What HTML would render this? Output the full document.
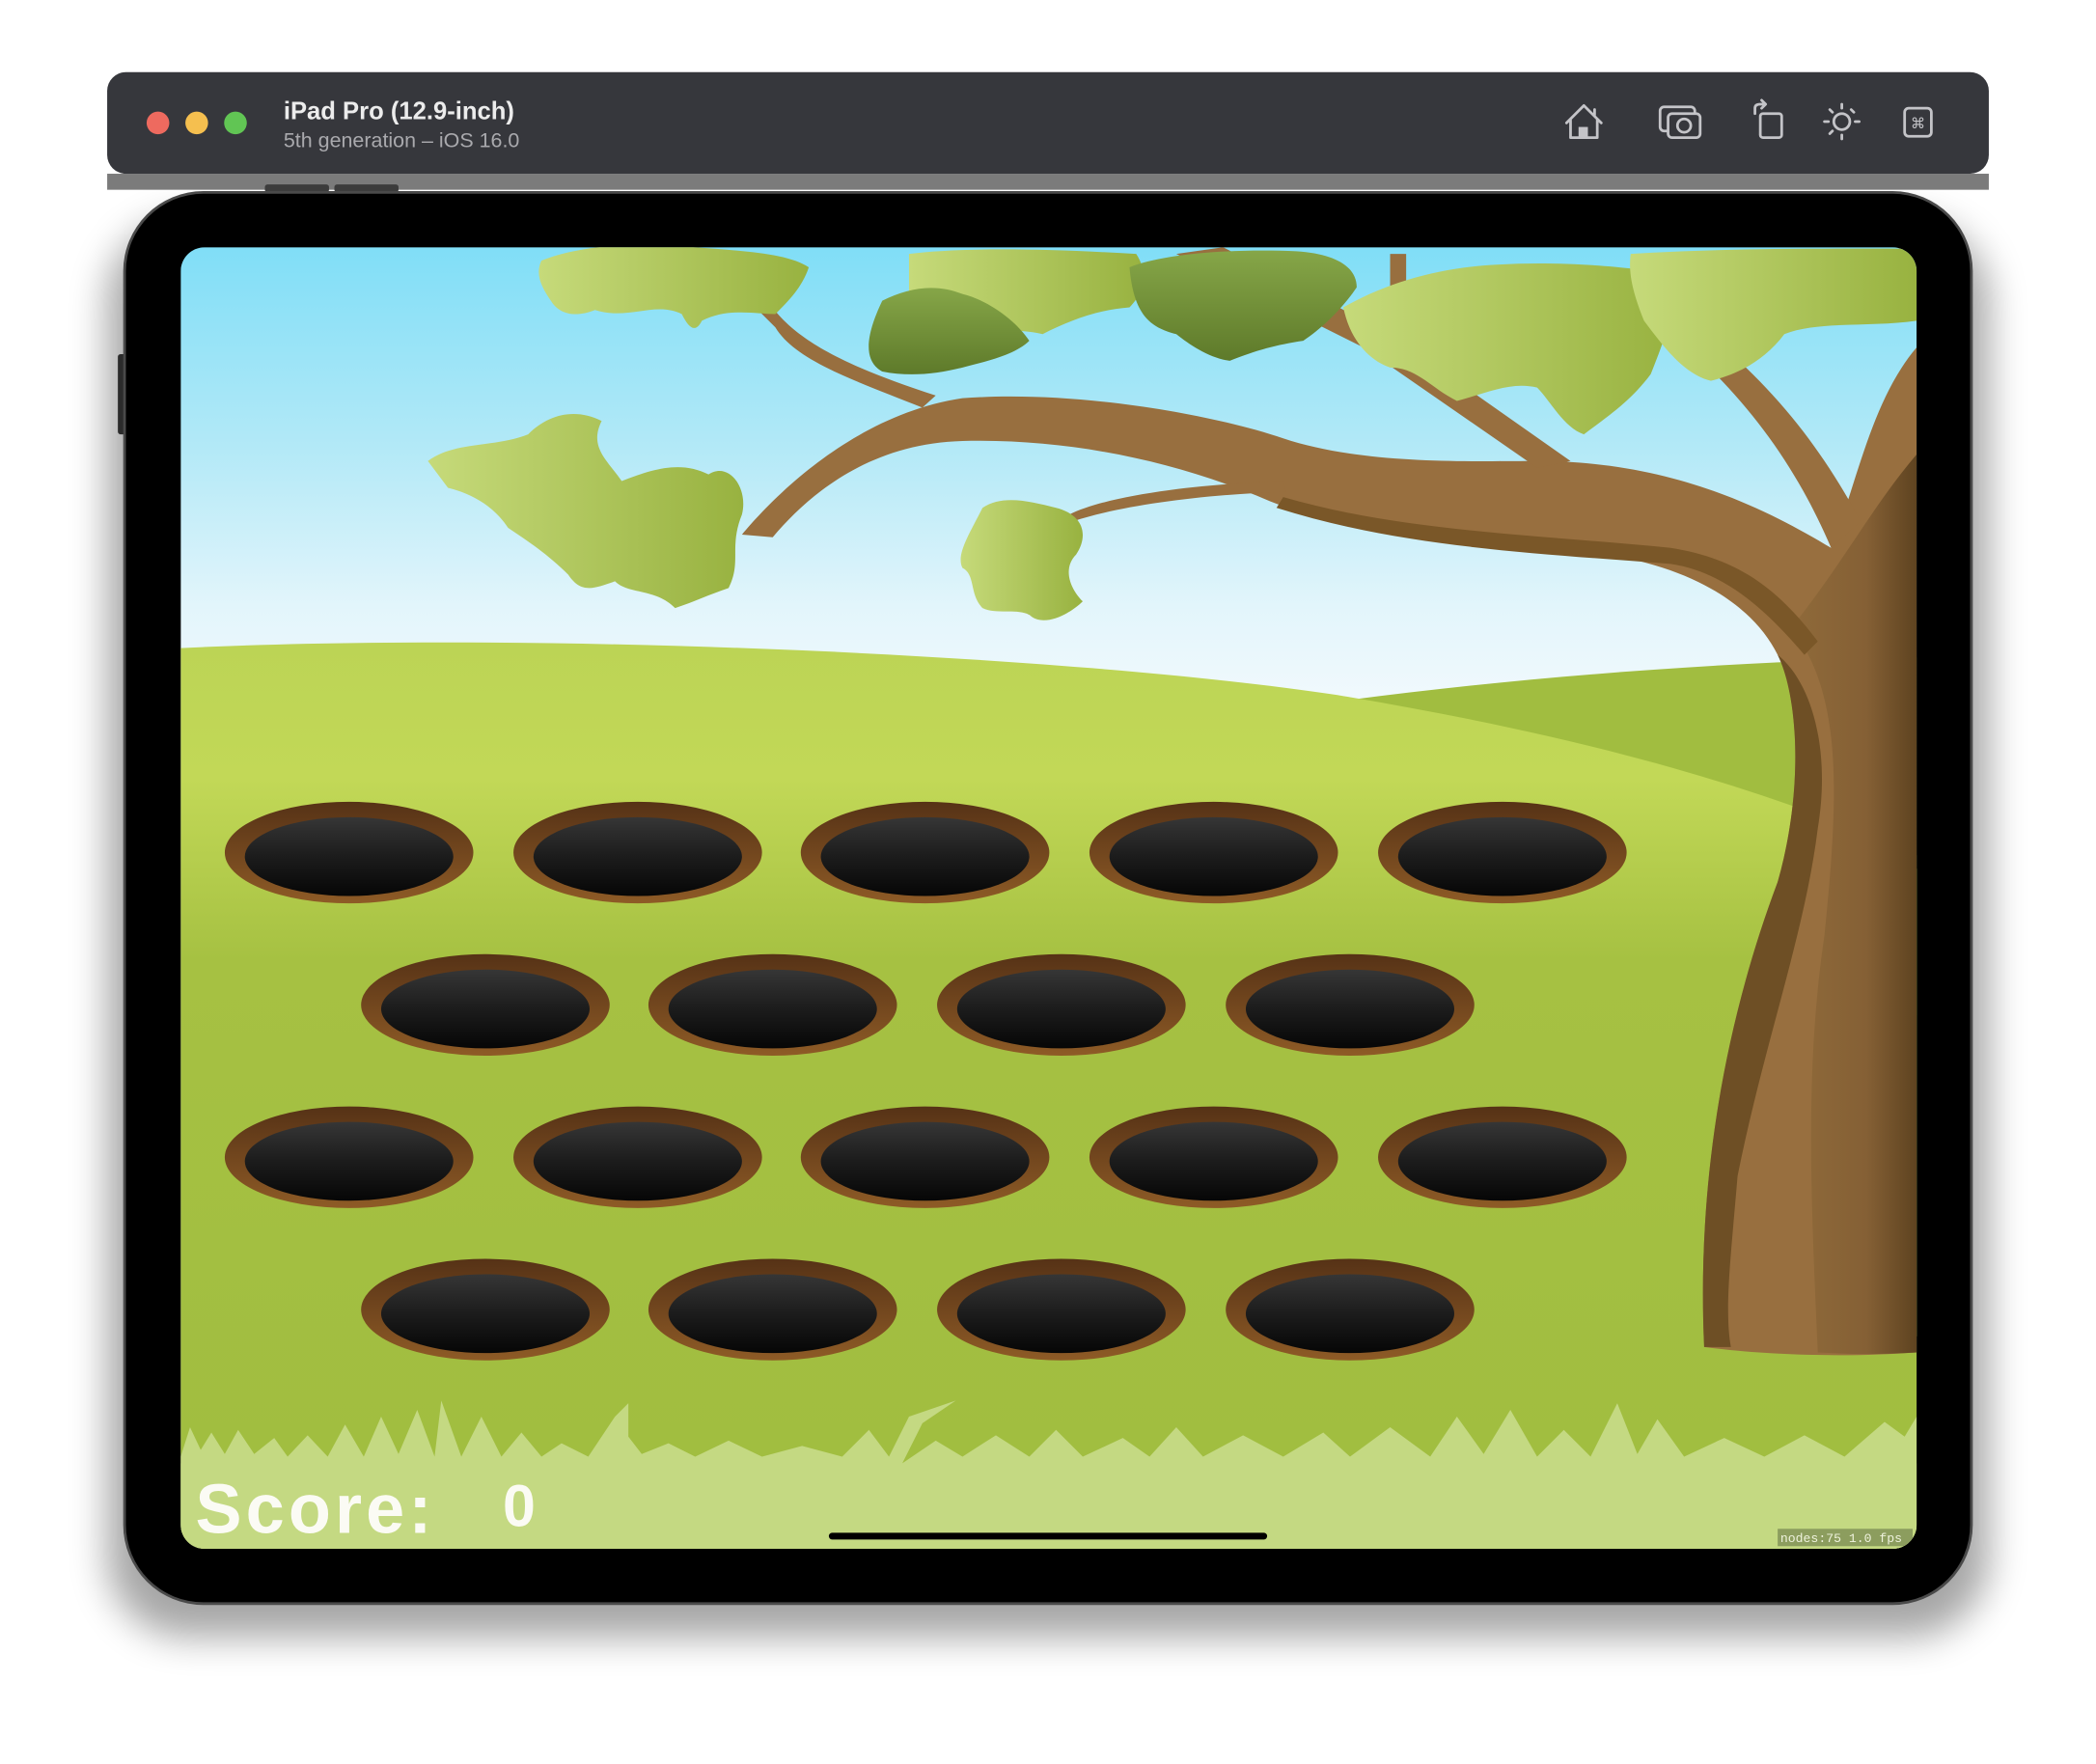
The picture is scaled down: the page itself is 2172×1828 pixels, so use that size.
<!DOCTYPE html>
<html><head><meta charset="utf-8"><style>
html,body{margin:0;padding:0;background:#fff;}
svg{display:block}
</style></head><body>
<svg width="2172" height="1828" viewBox="0 0 1568 1320" xmlns="http://www.w3.org/2000/svg">
<defs>
<linearGradient id="sky" gradientUnits="userSpaceOnUse" x1="0" y1="185" x2="0" y2="520"><stop offset="0" stop-color="#80def7"/><stop offset="0.45" stop-color="#b3e9f7"/><stop offset="0.8" stop-color="#e2f5fb"/><stop offset="1" stop-color="#f0f9fd"/></linearGradient>
<linearGradient id="hill" x1="0" y1="0" x2="0" y2="1"><stop offset="0" stop-color="#bcd455"/><stop offset="0.15" stop-color="#c2d857"/><stop offset="0.35" stop-color="#a6c142"/><stop offset="1" stop-color="#a0bd40"/></linearGradient>
<linearGradient id="rim" x1="0" y1="0" x2="0" y2="1"><stop offset="0" stop-color="#563216"/><stop offset="1" stop-color="#8e5b26"/></linearGradient>
<linearGradient id="pit" x1="0" y1="0" x2="0" y2="1"><stop offset="0" stop-color="#363636"/><stop offset="0.5" stop-color="#1c1c1c"/><stop offset="1" stop-color="#060606"/></linearGradient>
<linearGradient id="trunk" x1="0" y1="0" x2="1" y2="0"><stop offset="0" stop-color="#8f6a3a"/><stop offset="0.6" stop-color="#856035"/><stop offset="1" stop-color="#5e4320"/></linearGradient>
<linearGradient id="leaf" x1="0" y1="0" x2="1" y2="0"><stop offset="0" stop-color="#c6da7a"/><stop offset="1" stop-color="#98b240"/></linearGradient>
<linearGradient id="leafd" x1="0" y1="0" x2="0" y2="1"><stop offset="0" stop-color="#86a648"/><stop offset="1" stop-color="#5e7a2a"/></linearGradient>
<filter id="sh" x="-10%" y="-10%" width="120%" height="130%"><feGaussianBlur stdDeviation="14"/></filter>
<clipPath id="scr"><rect x="135" y="185" width="1299" height="974" rx="18"/></clipPath>
</defs>

<rect x="80" y="143" width="1408" height="1060" rx="60" fill="#000" opacity="0.35" filter="url(#sh)" transform="translate(0,22)"/>
<rect x="80" y="54" width="1408" height="76" rx="14" fill="#36373c"/>
<rect x="80" y="130" width="1408" height="12" fill="#7b7b7b"/>
<rect x="198" y="138" width="48" height="6" rx="2" fill="#3c3c3c"/>
<rect x="250" y="138" width="48" height="6" rx="2" fill="#3c3c3c"/>
<circle cx="118" cy="92" r="8.5" fill="#ee6a5f"/>
<circle cx="147" cy="92" r="8.5" fill="#f5bf4f"/>
<circle cx="176" cy="92" r="8.5" fill="#61c554"/>
<text x="212" y="89" font-family="Liberation Sans, sans-serif" font-weight="bold" font-size="18.5" fill="#ececec">iPad Pro (12.9-inch)</text>
<text x="212" y="110" font-family="Liberation Sans, sans-serif" font-size="15.5" fill="#a9a9ad">5th generation – iOS 16.0</text>
<g fill="none" stroke="#c4c4c8" stroke-width="2" stroke-linejoin="round" stroke-linecap="round">
<path d="M1172,92 L1185,79 L1198,92 M1175,90 V103 H1195 V90 M1193,82 V86"/>
<rect x="1181" y="95" width="7" height="8" fill="#c4c4c8" stroke="none"/>
<rect x="1242" y="80" width="26" height="18" rx="3"/>
<rect x="1248" y="85" width="24" height="18" rx="3" fill="#36373c"/>
<circle cx="1260" cy="94" r="5"/>
<path d="M1313,85 V81 Q1313,78 1317,78 H1320 M1318,75 L1321,78 L1318,81"/>
<rect x="1317" y="85" width="16" height="18" rx="2"/>
<circle cx="1378" cy="91" r="6"/>
<path d="M1378,78 V81 M1378,101 V104 M1365,91 H1368 M1388,91 H1391 M1369,82 L1371,84 M1385,82 L1387,84 M1369,100 L1371,98"/>
<rect x="1425" y="81" width="20" height="21" rx="3"/>
</g>
<text x="1435" y="96" text-anchor="middle" font-family="DejaVu Sans, sans-serif" font-size="11" fill="#c4c4c8">⌘</text>

<rect x="88" y="265" width="6" height="60" rx="2" fill="#2b2b2b"/>
<rect x="92" y="143" width="1384" height="1058" rx="60" fill="#4a4a4a"/>
<rect x="94" y="145" width="1380" height="1054" rx="58" fill="#000"/>

<g clip-path="url(#scr)">
<rect x="135" y="185" width="1299" height="974" fill="url(#sky)"/>
<path d="M1000,525 C1150,505 1300,495 1434,492 L1434,760 L1000,700 Z" fill="#a1bd40"/>
<path d="M135,485 C400,472 800,490 1000,520 C1150,545 1300,580 1434,640 L1434,1159 L135,1159 Z" fill="url(#hill)"/>
<rect x="1390" y="650" width="60" height="350" fill="#b3cc50"/>

<g fill="#986f3f">
<path d="M555,400 C580,370 640,310 720,298 C800,292 900,308 960,328 C1020,348 1100,345 1150,345 C1250,345 1320,380 1370,410 C1390,360 1400,300 1434,260 L1434,1012 C1380,1016 1320,1014 1275,1008 C1270,900 1285,780 1330,660 C1350,590 1345,520 1330,490 C1310,450 1260,420 1180,412 C1080,405 1000,395 950,375 C880,345 800,328 720,330 C650,332 605,370 578,402 Z"/>
<path d="M1150,350 L1020,260 L880,190 L915,185 L1040,250 L1175,345 Z"/>
<path d="M690,305 C640,285 595,270 580,245 L560,225 L572,222 C590,250 620,270 700,296 Z"/>
<path d="M1370,410 C1340,340 1300,290 1240,240 L1255,232 C1320,280 1360,330 1392,390 Z"/>
<path d="M960,360 C900,362 830,370 800,385 L803,390 C840,378 900,370 962,368 Z"/>
<path d="M1040,270 L1040,190 L1052,190 L1052,265 Z"/>
</g>
<path d="M1275,1008 C1270,900 1285,780 1330,660 C1350,590 1345,520 1330,490 C1355,510 1370,560 1360,620 C1350,700 1320,780 1300,880 C1295,940 1290,980 1295,1008 Z" fill="#6e4f25"/>
<path d="M1340,470 C1380,420 1400,380 1434,340 L1434,1012 C1400,1014 1380,1013 1360,1012 C1355,900 1350,800 1365,700 C1375,600 1380,520 1340,470 Z" fill="url(#trunk)"/>
<path d="M960,372 C1050,398 1150,400 1250,410 C1300,418 1330,440 1360,480 L1350,490 C1320,455 1290,428 1250,422 C1150,414 1050,410 955,380 Z" fill="#7a5728"/>
<path d="M800,385 L770,460" stroke="#8a6234" stroke-width="2"/>

<g fill="url(#leaf)">
<path d="M320,345 C340,330 370,335 395,325 C410,310 430,305 450,315 C440,335 455,345 465,360 C490,350 510,345 530,355 C545,345 560,365 555,385 C545,410 555,420 545,440 C530,445 520,450 505,455 C490,440 470,445 460,435 C445,440 435,445 425,430 C410,415 395,405 380,395 C370,380 355,370 335,365 Z"/>
<path d="M405,195 C430,185 470,180 520,185 C560,188 590,190 605,200 C600,215 590,225 580,235 C565,235 545,230 525,240 C520,250 515,245 510,235 C490,225 470,240 445,232 C430,238 418,235 412,225 C405,215 400,205 405,195 Z"/>
<path d="M680,190 C720,185 780,186 850,190 C860,205 855,220 845,230 C820,232 800,240 780,250 C760,245 740,250 720,245 C700,250 690,240 680,230 Z"/>
<path d="M1005,230 C1040,210 1080,200 1120,198 C1170,195 1220,200 1250,205 C1255,230 1245,255 1235,280 C1220,300 1205,310 1185,325 C1170,320 1160,300 1150,290 C1130,285 1110,295 1090,300 C1070,290 1060,275 1040,275 C1025,270 1010,255 1005,230 Z"/>
<path d="M1220,190 C1280,186 1350,186 1434,186 L1434,240 C1400,245 1360,240 1335,250 C1320,270 1300,280 1280,285 C1260,280 1245,260 1230,240 C1222,220 1218,205 1220,190 Z"/>
<path d="M735,380 C750,370 770,375 790,380 C810,385 815,400 805,415 C795,425 800,440 810,450 C800,460 780,470 770,460 C760,455 745,460 735,455 C725,445 730,430 720,425 C715,415 725,400 735,380 Z"/>
</g>
<g fill="url(#leafd)">
<path d="M660,225 C680,215 700,212 720,220 C740,225 760,240 770,255 C760,265 740,270 720,275 C700,280 680,282 660,278 C645,270 648,250 660,225 Z"/>
<path d="M845,200 C870,190 920,186 970,188 C1000,190 1015,200 1015,215 C1005,230 990,245 975,255 C955,258 940,262 920,270 C905,268 890,258 880,250 C860,245 848,235 845,200 Z"/>
</g>

<g id="h"><ellipse cx="0" cy="0" rx="93" ry="38" fill="url(#rim)"/><ellipse cx="0" cy="3" rx="78" ry="29.5" fill="url(#pit)"/></g>
<use href="#h" x="261" y="638"/><use href="#h" x="477" y="638"/><use href="#h" x="692" y="638"/><use href="#h" x="908" y="638"/><use href="#h" x="1124" y="638"/>
<use href="#h" x="363" y="752"/><use href="#h" x="578" y="752"/><use href="#h" x="794" y="752"/><use href="#h" x="1010" y="752"/>
<use href="#h" x="261" y="866"/><use href="#h" x="477" y="866"/><use href="#h" x="692" y="866"/><use href="#h" x="908" y="866"/><use href="#h" x="1124" y="866"/>
<use href="#h" x="363" y="980"/><use href="#h" x="578" y="980"/><use href="#h" x="794" y="980"/><use href="#h" x="1010" y="980"/>

<path d="M135,1090 L142,1068 L150,1085 L158,1072 L168,1088 L178,1070 L190,1088 L205,1076 L215,1090 L230,1074 L245,1090 L258,1066 L272,1090 L285,1060 L298,1088 L312,1055 L325,1090 L330,1048 L345,1090 L360,1060 L375,1090 L390,1072 L405,1090 L420,1080 L440,1090 L460,1060 L470,1050 L470,1075 L480,1088 L500,1080 L520,1090 L545,1078 L570,1090 L600,1082 L630,1090 L650,1070 L665,1090 L680,1060 L715,1048 L690,1065 L675,1095 L700,1078 L720,1090 L745,1074 L770,1090 L790,1070 L810,1090 L840,1076 L860,1090 L880,1068 L900,1090 L930,1074 L960,1090 L990,1072 L1010,1090 L1040,1068 L1070,1090 L1090,1060 L1110,1088 L1130,1055 L1150,1090 L1170,1070 L1190,1090 L1210,1050 L1225,1088 L1240,1062 L1260,1090 L1290,1076 L1320,1090 L1350,1074 L1380,1090 L1410,1064 L1425,1075 L1434,1060 L1434,1160 L135,1160 Z" fill="#c4d982"/>
<rect x="135" y="1095" width="1299" height="70" fill="#c4d982"/>
<rect x="620" y="1147" width="328" height="5" rx="2.5" fill="#000"/>
<rect x="1330" y="1144" width="101" height="13" fill="#8c9d5e"/>
<text x="1332" y="1154" font-family="Liberation Mono, monospace" font-size="9.5" fill="#eef2dc">nodes:75  1.0 fps</text>
<text x="146" y="1147" font-family="Liberation Sans, sans-serif" font-size="52" font-weight="bold" fill="#fbfbf4" letter-spacing="3">Score:</text>
<text x="376" y="1142" font-family="Liberation Sans, sans-serif" font-size="44" font-weight="bold" fill="#fbfbf4">0</text>
</g>
</svg>
</body></html>
